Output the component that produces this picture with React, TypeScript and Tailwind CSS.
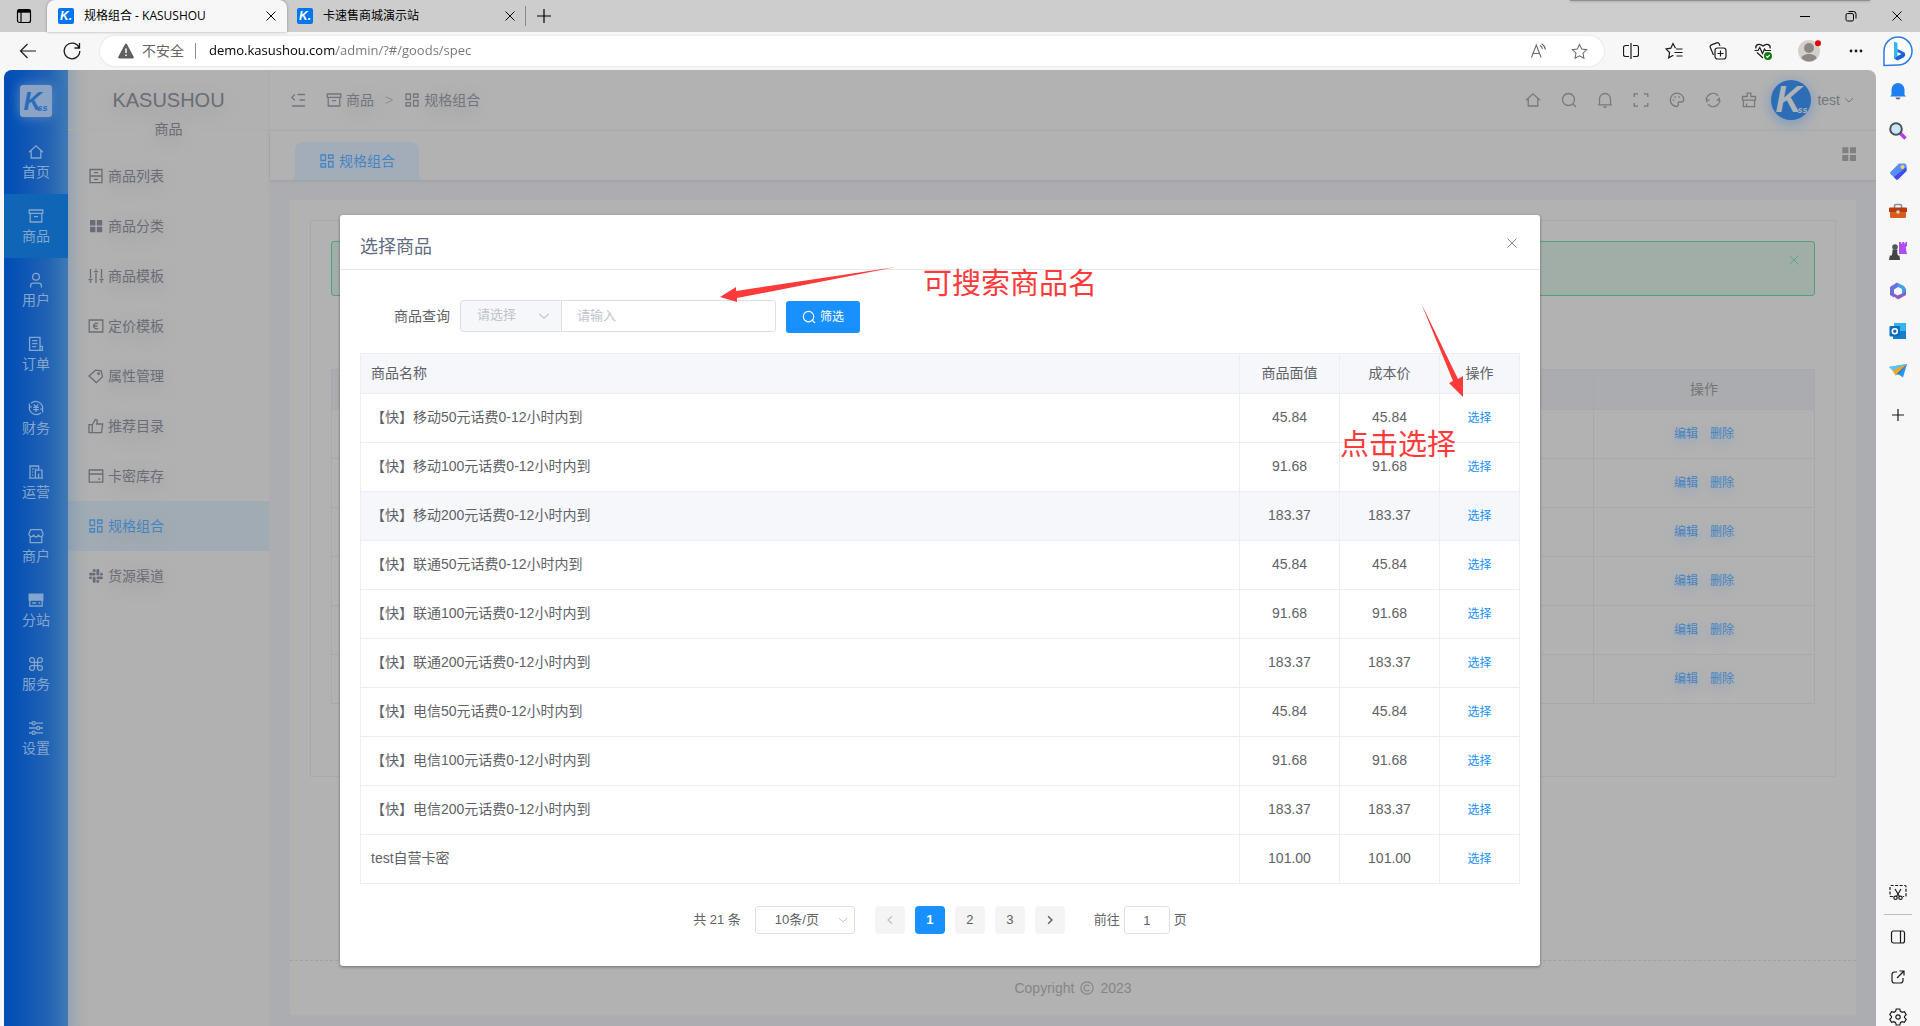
import type { ReactNode } from "react";
import { FaSlack } from "react-icons/fa";

type IconName =
  | "home"
  | "box"
  | "user"
  | "order"
  | "finance"
  | "building"
  | "shop"
  | "site"
  | "clover"
  | "sliders"
  | "cabinet"
  | "gridFill"
  | "slidersV"
  | "euro"
  | "tag"
  | "thumb"
  | "card"
  | "grid"
  | "slack"
  | "search"
  | "bell"
  | "full"
  | "palette"
  | "refresh"
  | "brush"
  | "fold"
  | "down"
  | "left"
  | "right"
  | "close";

// 16x16 stroke icons
const ICONS: Record<IconName, ReactNode> = {
  home: <path d="M1 8.2 8 1.8l7 6.4M3.2 6.8V14h9.6V6.8" />,
  box: <path d="M1.2 2h13.6v3.4H1.2zM2.2 5.4V14h11.6V5.4M6 8.6h4" />,
  user: (
    <>
      <circle cx="8" cy="4.8" r="3.4" />
      <path d="M2.6 15.5v-1.8c0-1.4 1.2-2.5 2.7-2.5h5.4c1.5 0 2.7 1.1 2.7 2.5v1.8" />
    </>
  ),
  order: <path d="M12 14.4V1.4H1.6v13h12.8v-4H12M4.2 4.6h5.2M4.2 7.6h5.2M4.2 10.6h4" />,
  finance: (
    <>
      <path d="M3 3.2a7 7 0 0 1 11.6 6M13 12.8A7 7 0 0 1 1.4 6.8M1.4 3.5v3.3h2.4M14.6 12.5V9.2h-2.4" />
      <path d="M5.7 4.4 8 7l2.3-2.6M5.2 7.4h5.6M5.2 9.6h5.6M8 7v5" />
    </>
  ),
  building: <path d="M1 14.2h14M2 14V2h8.6v4M7.4 14V6.2H14V14M10.6 14V9.5M4.2 5h1.6M4.2 8h1M4.2 11h1M7.4 4.6h1" />,
  shop: <path d="M2.6 1.6h10.8L15 6a2.2 2.2 0 0 1-4.6.6 2.4 2.4 0 0 1-4.8 0A2.2 2.2 0 0 1 1 6zM2.2 8.6v6h11.6v-6" />,
  site: (
    <>
      <path d="M1.2 2.2h13.6v6H1.2z" fill="currentColor" />
      <path d="M1.8 8v6h12.4V8M4.2 11h4M10.5 11h1.8" />
    </>
  ),
  clover: <path d="M6.4 6.4H4a2.4 2.4 0 1 1 2.4-2.4v8A2.4 2.4 0 1 1 4 9.6h8A2.4 2.4 0 1 1 9.6 12V4A2.4 2.4 0 1 1 12 6.4z" />,
  sliders: (
    <>
      <path d="M1 3.2h3M7.4 3.2H15M1 8h7.4M12 8h3M1 12.8h3M7.4 12.8H15" />
      <circle cx="5.7" cy="3.2" r="1.6" />
      <circle cx="10.2" cy="8" r="1.6" />
      <circle cx="5.7" cy="12.8" r="1.6" />
    </>
  ),
  cabinet: <path d="M2 1.5h12v13.2H2zM2 8h12M6 4.7h4M6 11.4h4" />,
  gridFill: (
    <path d="M2 2h5.4v5.4H2zM8.8 2h5.4v5.4H8.800zM2 8.800h5.400v5.400H2zM8.800 8.800h5.400v5.400H8.800z" fill="currentColor" stroke="none" />
  ),
  slidersV: <path d="M2.5 1v9M.5 11.5h4M2.5 12.5V15M8 5v10M6 3.6h4M8 1v1.500M13.500 1v9M11.500 11.500h4M13.500 12.500V15" />,
  euro: <path d="M1.2 2h13.6v12H1.2zM10.2 5.8a2.8 2.8 0 1 0 0 4.4M5.6 8h3.800" />,
  tag: (
    <>
      <path d="M1 8 7.500 2.200l5.700.6 1.300 6L8.300 14.600z" />
      <circle cx="10.600" cy="5.600" r=".8" />
    </>
  ),
  thumb: <path d="M1 6.600h3.200v8H1zM4.200 7l3.200-5.600c1.600 0 2.200 1.200 1.800 2.600L8.700 6h6l-1.200 8.600H4.200" />,
  card: <path d="M1.200 2h13.600v12.200H1.200zM1.200 6h13.600M10.500 11h1.600" />,
  grid: <path d="M2 2h4.500v5.500H2zM9.600 2H14v3.400H9.600zM2 10.600h4.500V14H2zM9.600 8.500H14V14H9.600z" />,
  slack: null,
  search: (
    <>
      <circle cx="7.500" cy="7.500" r="6" />
      <path d="m12 12 3 3" />
    </>
  ),
  bell: <path d="M2.500 12.800V7a5.500 5.500 0 0 1 11 0v5.800M1.200 12.800h13.600M6.400 15h3.200" />,
  full: <path d="M1.200 5V1.800H5M11 1.800h3.800V5M14.800 11v3.200H11M5 14.200H1.200V11" />,
  palette: (
    <>
      <path d="M14.700 7.400c0 1.800-1.300 2.600-2.700 2.600h-1.600c-1 0-1.600.9-1.200 1.800.4 1-.1 2.700-1.400 2.700a6.700 6.700 0 1 1 6.900-7.100z" />
      <path d="M3.800 8.200h1.400M5.400 5h1.400M9.400 5h1.400" />
    </>
  ),
  refresh: <path d="M2 10.500A6.500 6.500 0 0 1 13 3.800M14 5.500A6.500 6.500 0 0 1 3 12.200M1 5.800l.8 2.600 2.600-.6M15 10.200l-.8-2.600-2.600.6" />,
  brush: <path d="M6.200 4.500V1.200h3.600v3.300h4.700v3.600h-13V4.500zM2.400 8.100v6.500h11.200V8.100M5.500 14.400v-3" />,
  fold: <path d="M7.500 2.500H15M9.500 8H15M2 14h13M4.800 2.500 1.800 5.400l3 2.900" />,
  down: <path d="m2.500 5.500 5.500 5 5.500-5" />,
  left: <path d="M10.500 3 5.500 8l5 5" strokeWidth="2" />,
  right: <path d="m5.500 3 5 5-5 5" strokeWidth="2" />,
  close: <path d="m2 2 12 12M14 2 2 14" />,
};

function Icon({ name, className = "h-4 w-4" }: { name: IconName; className?: string }) {
  if (name === "slack") return <FaSlack className={className} />;
  return (
    <svg viewBox="0 0 16 16" className={`shrink-0 ${className}`} fill="none" stroke="currentColor" strokeWidth="1.300">
      {ICONS[name]}
    </svg>
  );
}

const NAV: { icon: IconName; label: string }[] = [
  { icon: "home", label: "首页" },
  { icon: "box", label: "商品" },
  { icon: "user", label: "用户" },
  { icon: "order", label: "订单" },
  { icon: "finance", label: "财务" },
  { icon: "building", label: "运营" },
  { icon: "shop", label: "商户" },
  { icon: "site", label: "分站" },
  { icon: "clover", label: "服务" },
  { icon: "sliders", label: "设置" },
];

const MENU: { icon: IconName; label: string }[] = [
  { icon: "cabinet", label: "商品列表" },
  { icon: "gridFill", label: "商品分类" },
  { icon: "slidersV", label: "商品模板" },
  { icon: "euro", label: "定价模板" },
  { icon: "tag", label: "属性管理" },
  { icon: "thumb", label: "推荐目录" },
  { icon: "card", label: "卡密库存" },
  { icon: "grid", label: "规格组合" },
  { icon: "slack", label: "货源渠道" },
];

const HEADER_ICONS: { icon: IconName; label: string }[] = [
  { icon: "home", label: "home" },
  { icon: "search", label: "search" },
  { icon: "bell", label: "notice" },
  { icon: "full", label: "fullscreen" },
  { icon: "palette", label: "theme" },
  { icon: "refresh", label: "refresh" },
  { icon: "brush", label: "clear" },
];

const GOODS = [
  { name: "【快】移动50元话费0-12小时内到", price: "45.84" },
  { name: "【快】移动100元话费0-12小时内到", price: "91.68" },
  { name: "【快】移动200元话费0-12小时内到", price: "183.37" },
  { name: "【快】联通50元话费0-12小时内到", price: "45.84" },
  { name: "【快】联通100元话费0-12小时内到", price: "91.68" },
  { name: "【快】联通200元话费0-12小时内到", price: "183.37" },
  { name: "【快】电信50元话费0-12小时内到", price: "45.84" },
  { name: "【快】电信100元话费0-12小时内到", price: "91.68" },
  { name: "【快】电信200元话费0-12小时内到", price: "183.37" },
  { name: "test自营卡密", price: "101.00" },
];

function Favicon() {
  return (
    <span className="flex h-4 w-4 shrink-0 items-center justify-center rounded-[2px] bg-[#0075f2] font-['Liberation_Sans'] text-xs font-bold italic leading-4 text-white">
      K.
    </span>
  );
}

function TitleBar() {
  return (
    <div className="relative flex h-8 shrink-0 bg-[#cdcdcd] text-xs text-black">
      <button aria-label="tabs" className="flex w-[47px] items-center justify-center">
        <svg viewBox="0 0 16 16" className="h-4 w-4" fill="none" stroke="currentColor" strokeWidth="1.200">
          <rect x="1.500" y="1.500" width="13" height="13" rx="2" />
          <path d="M1.500 3.200h13" strokeWidth="3" />
          <path d="M5 4v10" />
        </svg>
      </button>
      <div className="flex w-60 items-center rounded-t-lg bg-[#f7f7f7] pl-[11px] pr-2 shadow-[0_0_3px_rgba(0,0,0,0.35)]">
        <Favicon />
        <span className="ml-[10px] flex-1">规格组合 - KASUSHOU</span>
        <button aria-label="close tab" className="flex h-4 w-4 items-center justify-center">
          <Icon name="close" className="h-3 w-3" />
        </button>
      </div>
      <div className="flex w-[238px] items-center pl-[10px] pr-[7px]">
        <Favicon />
        <span className="ml-[10px] flex-1">卡速售商城演示站</span>
        <button aria-label="close tab" className="flex h-4 w-4 items-center justify-center">
          <Icon name="close" className="h-3 w-3" />
        </button>
      </div>
      <div className="my-[6px] w-px bg-[#8a8a8a]" />
      <button aria-label="new tab" className="flex w-9 items-center justify-center">
        <svg viewBox="0 0 16 16" className="h-4 w-4" stroke="currentColor" strokeWidth="1.200">
          <path d="M8 1v14M1 8h14" />
        </svg>
      </button>
      <div className="absolute right-[50px] top-0 h-px w-[300px] bg-[#8f8f8f] shadow-[0_0_3px_#777]" />
      <div className="ml-auto flex w-[138px]">
        <button aria-label="minimize" className="flex flex-1 items-center justify-center">
          <span className="h-px w-[10px] bg-black" />
        </button>
        <button aria-label="restore" className="flex flex-1 items-center justify-center">
          <svg viewBox="0 0 12 12" className="h-3 w-3" fill="none" stroke="currentColor">
            <rect x="1" y="3.500" width="7.500" height="7.500" rx="1.500" />
            <path d="M3.500 1.500h5a2.500 2.500 0 0 1 2.500 2.500v4.500" />
          </svg>
        </button>
        <button aria-label="close window" className="flex flex-1 items-center justify-center">
          <Icon name="close" className="h-3 w-3" />
        </button>
      </div>
    </div>
  );
}

function AddressBar() {
  return (
    <div className="flex h-[38px] shrink-0 items-center text-[#1a1a1a]">
      <button aria-label="back" className="ml-[19px] h-[18px] w-[18px]">
        <svg viewBox="0 0 18 18" fill="none" stroke="currentColor" strokeWidth="1.200">
          <path d="M17 9H1.500M8.500 2l-7 7 7 7" />
        </svg>
      </button>
      <button aria-label="reload" className="ml-[26px] h-[18px] w-[18px]">
        <svg viewBox="0 0 18 18" fill="none" stroke="currentColor" strokeWidth="1.300">
          <path d="M16 5.500A7.800 7.800 0 1 0 16.800 9M16.500 1v5h-5" />
        </svg>
      </button>
      <div className="ml-[19px] flex h-[30px] flex-1 items-center rounded-full bg-white pl-[18px] pr-4 shadow-[0_0_3px_rgba(0,0,0,0.12)]">
        <svg viewBox="0 0 16 16" className="h-4 w-4" fill="#5f5f5f">
          <path d="M7 1.200a1.100 1.100 0 0 1 2 0l6.700 12.600c.4.700-.1 1.700-1 1.700H1.300c-.9 0-1.400-1-1-1.700z" />
          <path d="M8 5.500v4.500M8 11.500v1.600" stroke="#fff" strokeWidth="1.500" />
        </svg>
        <span className="ml-2 text-sm text-[#666]">不安全</span>
        <span className="ml-[11px] h-4 w-px bg-[#8a8a8a]" />
        <input
          aria-label="address"
          defaultValue="demo.kasushou.com/admin/?#/goods/spec"
          className="ml-[13px] w-0 flex-1 bg-[linear-gradient(90deg,#000_0,#000_126px,#757575_127px)] bg-clip-text text-[13px] text-transparent outline-none"
        />
        <button aria-label="read aloud" className="h-4 w-[18px]">
          <svg viewBox="0 0 18 16" fill="none" stroke="#6b6b6b" strokeWidth="1.100">
            <path d="M1.500 14.500 6.300 2l4.800 12.500M3.200 10.500h6.200M10 2.600a4.500 4.500 0 0 1 2.400 3.400M11.500.8a8 8 0 0 1 4 5.700" />
          </svg>
        </button>
        <button aria-label="favorite" className="ml-[23px] h-[17px] w-[17px]">
          <svg viewBox="0 0 18 18" fill="none" stroke="#6b6b6b" strokeWidth="1.100">
            <path d="m9 1.500 2.300 4.900 5.300.7-3.900 3.700 1 5.400L9 13.600l-4.700 2.600 1-5.400L1.400 7.100l5.300-.7z" />
          </svg>
        </button>
      </div>
      <div className="flex w-[272px] items-center justify-between pl-[19px] pr-3">
        <button aria-label="split" className="h-4 w-4">
          <svg viewBox="0 0 16 16" fill="none" stroke="currentColor" strokeWidth="1.200">
            <path d="M8 0v16M6 2.500H2.500a2 2 0 0 0-2 2v7a2 2 0 0 0 2 2H6M10 2.500h3.500a2 2 0 0 1 2 2v7a2 2 0 0 1-2 2H10" />
          </svg>
        </button>
        <button aria-label="favorites" className="h-[18px] w-[18px]">
          <svg viewBox="0 0 18 18" fill="none" stroke="currentColor" strokeWidth="1.200">
            <path d="M10.500 6.200 8 1.500 5.800 6.200 1 7l3.600 3.500-.9 5.300L8.300 13.200M11 7h6.500M9.500 10.500h8M11.500 14h6" />
          </svg>
        </button>
        <button aria-label="collections" className="h-[18px] w-[18px]">
          <svg viewBox="0 0 18 18" fill="none" stroke="currentColor" strokeWidth="1.200">
            <rect x="6" y="6" width="11" height="11" rx="2.500" />
            <path d="M11.500 8.500v6M8.500 11.500h6M4.500 13 1.300 5.500a2 2 0 0 1 1.100-2.600l5.200-2a2 2 0 0 1 2.600 1l.8 2" />
          </svg>
        </button>
        <button aria-label="performance" className="h-[18px] w-[18px]">
          <svg viewBox="0 0 18 18" fill="none" stroke="currentColor" strokeWidth="1.200">
            <path d="M2 6.500C1 3 5 .5 9 4c4-3.500 8-1 7 2.500M.5 8.500H4l1.800-3 2.700 6 2-4.500 1 1.500H17M3 10.500l6 5.500" />
            <circle cx="14" cy="14" r="4" fill="#107c10" stroke="none" />
            <path d="m12.200 14 1.300 1.300 2.300-2.500" stroke="#fff" />
          </svg>
        </button>
        <button aria-label="profile" className="h-[22px] w-6">
          <svg viewBox="0 0 24 22">
            <circle cx="11" cy="11" r="11" fill="#d3d0cc" />
            <circle cx="11" cy="8" r="5" fill="#8d8884" />
            <path d="M3.500 18.500c0-6 15-6 15 0a11 11 0 0 1-15 0z" fill="#8d8884" />
            <circle cx="20" cy="3.200" r="3" fill="#e60000" />
          </svg>
        </button>
        <button aria-label="more" className="h-4 w-4">
          <svg viewBox="0 0 16 16" fill="currentColor">
            <circle cx="3" cy="8" r="1.400" />
            <circle cx="8" cy="8" r="1.400" />
            <circle cx="13" cy="8" r="1.400" />
          </svg>
        </button>
      </div>
    </div>
  );
}

const SIDE_APPS: { label: string; art: ReactNode }[] = [
  {
    label: "notifications",
    art: (
      <>
        <path d="M2.500 13V7.500a6.500 6.500 0 0 1 13 0V13l1.500 1.500H1z" fill="#1f7ff0" />
        <path d="M6.500 15.500h5a2.500 2 0 0 1-5 0z" fill="#6b6b78" />
      </>
    ),
  },
  {
    label: "search",
    art: (
      <>
        <path d="m11 11 5.500 5.500" stroke="#b63cf0" strokeWidth="3.500" />
        <circle cx="7" cy="7" r="5.800" fill="#c9e9fb" stroke="#4c5157" strokeWidth="2" />
      </>
    ),
  },
  {
    label: "shopping",
    art: (
      <>
        <path d="M10 1.500h6l1.500 1.500v6L9 17.200a1.500 1.500 0 0 1-2 0L1.500 12a1.500 1.500 0 0 1 0-2z" fill="#5b8df7" />
        <path d="M17.500 5v4L9 17.200a1.500 1.500 0 0 1-2 0L5 15z" fill="#3d4df0" />
        <circle cx="13.500" cy="5" r="2" fill="#ffd54a" />
      </>
    ),
  },
  {
    label: "tools",
    art: (
      <>
        <path d="M5.500 6V4a1.500 1.500 0 0 1 1.500-1.500h4A1.500 1.500 0 0 1 12.500 4v2" fill="none" stroke="#8b8f93" strokeWidth="1.600" />
        <path d="M1 9h16v5.500a1.500 1.500 0 0 1-1.500 1.500h-13A1.500 1.500 0 0 1 1 14.500z" fill="#dc5a1c" />
        <path d="M1 5.500h16a1 1 0 0 1 1 1V10H0V6.500a1 1 0 0 1 1-1z" fill="#b93c0e" />
        <circle cx="9" cy="10" r="1.800" fill="#d0d4d8" />
      </>
    ),
  },
  {
    label: "games",
    art: (
      <>
        <path d="M10 0h2v1.500h1.200V0h2v1.500h1.200V0H18v4l-1.200 1 .7 5.500 1 1.500H10z" fill="#b04cf5" />
        <circle cx="6" cy="5" r="2.800" fill="#555" />
        <path d="M3.500 7.500h5V9H8l.8 4.500h1.700L11 18H0l.8-4.500h2L3.600 9h-.1z" fill="#444" />
      </>
    ),
  },
  {
    label: "microsoft 365",
    art: (
      <>
        <path d="M8 .5 15 4l2 3v6l-4-2V7L8 4.500z" fill="#3fa2ef" />
        <path d="M8 .5 1 5v8l4 2.500V7.500L9 5z" fill="#6a6fe0" />
        <path d="M1 11.500 9 17.500l8-4.500V9l-4 2.500-4.500 2L5 11.500z" fill="#8a5fc4" />
        <path d="m9 5.800 3.200 1.700v3.400L9 12.600l-3.200-1.700V7.500z" fill="#f7f7f7" />
      </>
    ),
  },
  {
    label: "outlook",
    art: (
      <>
        <path d="M5 1h12v13H5z" fill="#35b5f0" />
        <path d="M11 9h6v8H4v-3z" fill="#1480cc" />
        <rect x=".5" y="4" width="10.500" height="10.500" rx="1" fill="#0f6cbd" />
        <circle cx="5.800" cy="9.200" r="2.500" fill="none" stroke="#fff" strokeWidth="1.600" />
      </>
    ),
  },
  {
    label: "drop",
    art: (
      <>
        <path d="M0 5 18 2 14 15.500 9 12z" fill="#2f95ee" />
        <path d="m0 5 18-3L4 9z" fill="#59c4f5" />
        <path d="M3.500 8.500 18 2 6.500 13.500z" fill="#f2a91f" />
        <path d="M6.500 13.500 18 2l-8 10z" fill="#1b6ed6" />
      </>
    ),
  },
];

function EdgeSidebar() {
  return (
    <aside className="flex w-11 shrink-0 flex-col items-center text-[#1a1a1a]">
      <button aria-label="bing" className="mb-px flex h-[38px] items-center">
        <svg viewBox="0 0 32 32" className="h-8 w-8" fill="none">
          <path d="M2 30.500V16A14 14 0 1 1 16 30z" fill="#fff" stroke="#2a7be4" strokeWidth="1.500" />
          <path d="M12 6.500 15.500 8v13L12 23.500z" fill="#2fb9f0" />
          <path d="M12 23.500l3.500-2.500 4-2-4-2V14l7 3.500c1.500 2 .5 4-1 5L15.500 25.500z" fill="#1d62d8" />
        </svg>
      </button>
      {SIDE_APPS.map((app) => (
        <button key={app.label} aria-label={app.label} className="flex h-10 items-center">
          <svg viewBox="0 0 18 18" className="h-[18px] w-[18px]">
            {app.art}
          </svg>
        </button>
      ))}
      <button aria-label="add" className="mt-1 flex h-10 items-center">
        <svg viewBox="0 0 14 14" className="h-[14px] w-[14px]" stroke="currentColor" strokeWidth="1.200">
          <path d="M7 1v12M1 7h12" />
        </svg>
      </button>
      <div className="flex-1" />
      <button aria-label="screenshot" className="mb-px flex h-[42px] items-center">
        <svg viewBox="0 0 18 18" className="h-[18px] w-[18px]" fill="none" stroke="currentColor" strokeWidth="1.200">
          <path d="M4 13.500H2a1 1 0 0 1-1-1v-9a1 1 0 0 1 1-1h14a1 1 0 0 1 1 1v9a1 1 0 0 1-1 1h-2" strokeDasharray="3 1.500" />
          <path d="m6 6 4.500 7.500M12 6l-4.500 7.500" />
          <circle cx="6.500" cy="14.800" r="1.700" />
          <circle cx="11.500" cy="14.800" r="1.700" />
        </svg>
      </button>
      <div className="h-px w-7 shrink-0 bg-[#bdbdbd]" />
      <button aria-label="hide sidebar" className="mt-[2px] flex h-10 items-center">
        <svg viewBox="0 0 16 16" className="h-4 w-4" fill="none" stroke="currentColor" strokeWidth="1.200">
          <rect x="1.500" y="2" width="13" height="12" rx="2" />
          <path d="M10.500 2v12" />
        </svg>
      </button>
      <button aria-label="open link" className="flex h-10 items-center">
        <svg viewBox="0 0 16 16" className="h-4 w-4" fill="none" stroke="currentColor" strokeWidth="1.200">
          <path d="M7 3H4.500A2.500 2.500 0 0 0 2 5.500v6A2.500 2.500 0 0 0 4.500 14h6a2.500 2.500 0 0 0 2.500-2.500V9M9.500 2H14v4.500M14 2 7 9" />
        </svg>
      </button>
      <button aria-label="settings" className="flex h-[29px] items-end">
        <svg viewBox="0 0 18 18" className="h-[18px] w-[18px]" fill="none" stroke="currentColor" strokeWidth="1.200">
          <path d="M7.200 1h3.600l.6 2.300 1.700 1 2.300-.7 1.800 3.100L15.500 8.400v1.200l1.700 1.700-1.800 3.100-2.300-.7-1.700 1-.6 2.300H7.200l-.6-2.300-1.700-1-2.300.7-1.800-3.100 1.700-1.700V8.400L.8 6.700l1.800-3.100 2.300.7 1.700-1z" />
          <circle cx="9" cy="9" r="2.200" />
        </svg>
      </button>
    </aside>
  );
}

function MainNav() {
  return (
    <nav className="flex w-16 shrink-0 flex-col bg-[linear-gradient(90deg,#004db6_0,#0d55b5_30%,#2263b3_70%,#4079b4_100%)] pt-[15px]">
      <div className="mx-auto mb-[13px] flex h-8 w-8 items-center justify-center rounded-[3px] bg-[#8ba3c4] shadow-[0_0_12px_#5f8ac0]">
        <span className="-ml-px text-[25px] font-bold italic leading-8 text-[#2a6cbc]">K</span>
        <span className="-ml-1 mt-[14px] text-[9px] font-bold italic leading-3 text-[#2a6cbc]">ss</span>
      </div>
      {NAV.map((item) => (
        <a
          key={item.label}
          href="#"
          className={`flex h-16 flex-col items-center gap-[2px] pt-[14px] text-sm leading-5 text-[#85a6cd] ${
            item.label === "商品" ? "bg-[#0f65b6]" : ""
          }`}
        >
          <Icon name={item.icon} />
          {item.label}
        </a>
      ))}
    </nav>
  );
}

function SubMenu() {
  return (
    <div className="w-[202px] shrink-0 border-r border-[#adadad] bg-[linear-gradient(90deg,#94a3b2_0,#a9acaf_10px,#b1b1b1_22px)] text-sm text-[#6a6c76]">
      <div className="mt-4 text-center text-xl leading-7 [text-shadow:0_5px_16px_#9a9b9f]">KASUSHOU</div>
      <div className="mt-[5px] flex items-center leading-5">
        <span className="h-px flex-1 bg-[#adadad]" />
        <span className="px-5 [text-shadow:0_5px_16px_#9a9b9f]">商品</span>
        <span className="h-px flex-1 bg-[#adadad]" />
      </div>
      <div className="mt-3">
        {MENU.map((item) => (
          <a
            key={item.label}
            href="#"
            className={`flex h-[50px] items-center gap-1 pl-5 [text-shadow:0_5px_16px_#9a9b9f] ${
              item.label === "规格组合" ? "bg-[#4a8ac8]/15 text-[#4584c2]" : ""
            }`}
          >
            <Icon name={item.icon} />
            {item.label}
          </a>
        ))}
      </div>
    </div>
  );
}

function PageHeader() {
  return (
    <>
      <header className="flex h-[61px] shrink-0 items-center border-b border-[#acacac] pr-[21px] text-sm text-[#73757d]">
        <button aria-label="fold menu" className="ml-5">
          <Icon name="fold" />
        </button>
        <div className="ml-5 flex items-center gap-1 [text-shadow:0_5px_16px_#9a9b9f]">
          <Icon name="box" />
          <span>商品</span>
          <span className="mx-[7px] text-[#929398]">&gt;</span>
          <Icon name="grid" />
          <span>规格组合</span>
        </div>
        <div className="flex-1" />
        {HEADER_ICONS.map((item) => (
          <button key={item.label} aria-label={item.label} className="flex w-9 justify-center text-[#78797c]">
            <Icon name={item.icon} />
          </button>
        ))}
        <button className="ml-1 flex items-center text-[#75767a]">
          <span className="flex h-10 w-10 items-center justify-center rounded-full bg-[#2d6db5] font-bold italic text-[#b0b3b8] shadow-[0_3px_14px_#7396bf]">
            <span className="text-4xl leading-10">K</span>
            <span className="-ml-1 mt-5 text-[9px] leading-3">ss</span>
          </span>
          <span className="ml-[6px]">test</span>
          <Icon name="down" className="ml-[3px] h-3 w-3" />
        </button>
      </header>
      <div className="z-[1] flex h-[49px] shrink-0 items-end justify-between pl-[25px] pr-[18px] shadow-[0_1px_3px_#9c9ea2]">
        <a
          href="#"
          className="relative flex h-[38px] w-[124px] items-center justify-center gap-1 rounded-t-lg bg-[#a3adb9] text-sm text-[#4584c2] before:absolute before:-left-[6px] before:bottom-0 before:h-[6px] before:w-[6px] before:bg-[radial-gradient(circle_at_0_0,transparent_6px,#a3adb9_6px)] after:absolute after:-right-[6px] after:bottom-0 after:h-[6px] after:w-[6px] after:bg-[radial-gradient(circle_at_100%_0,transparent_6px,#a3adb9_6px)]"
        >
          <Icon name="grid" />
          规格组合
        </a>
        <button aria-label="tab menu" className="mb-[17px] text-[#808083]">
          <Icon name="gridFill" className="h-[18px] w-[18px]" />
        </button>
      </div>
    </>
  );
}

function SpecPage() {
  return (
    <div className="flex min-h-0 flex-1 flex-col bg-[#abadb0] px-5 pb-[11px] pt-5">
      <div className="flex min-h-0 flex-1 flex-col bg-[#b2b2b2]">
        <div className="mx-5 mt-5 border border-[#a9aaad] px-5 pb-[72px] pt-5">
          <div className="flex h-[55px] justify-end rounded-[3px] border border-[#4fa277] bg-[#a1aea7] px-[14px] pt-3 text-[#5ba57f]">
            <button aria-label="close alert" className="h-3 w-3">
              <Icon name="close" className="h-3 w-3" />
            </button>
          </div>
          <table className="mt-[73px] w-full border-collapse text-sm text-[#747578]">
            <thead>
              <tr className="h-10 bg-[#abacaf]">
                <th className="border border-[#a8a9ad]" />
                <th className="w-[221px] border border-[#a8a9ad] pb-0.5 font-normal">操作</th>
              </tr>
            </thead>
            <tbody>
              {[1, 2, 3, 4, 5, 6].map((row) => (
                <tr key={row} className="h-[49px]">
                  <td className="border border-[#a8a9ad]" />
                  <td className="border border-[#a8a9ad] text-center text-xs text-[#4584c2] [text-shadow:0_4px_12px_#8aa1ba]">
                    <a href="#">编辑</a>
                    <a href="#" className="ml-3">
                      删除
                    </a>
                  </td>
                </tr>
              ))}
            </tbody>
          </table>
        </div>
        <footer className="mt-auto flex h-[55px] items-center justify-center border-t border-dashed border-[#a1a1a1] text-sm text-[#858585]">
          Copyright
          <svg viewBox="0 0 16 16" className="mx-[6px] h-[14px] w-[14px]" fill="none" stroke="currentColor" strokeWidth="1.300">
            <circle cx="8" cy="8" r="7" />
            <path d="M10.600 5.800a3.400 3.400 0 1 0 0 4.400" />
          </svg>
          2023
        </footer>
      </div>
    </div>
  );
}

function Pagination() {
  return (
    <div className="mt-[22px] flex h-7 items-center justify-center text-[13px] text-[#606266]">
      <span>共 21 条</span>
      <div className="relative ml-[14px]">
        <select aria-label="page size" className="h-7 w-[100px] appearance-none rounded-[3px] border border-[#dcdfe6] bg-white pl-[19px]">
          <option>10条/页</option>
        </select>
        <Icon name="down" className="pointer-events-none absolute right-[6px] top-2 h-3 w-3 text-[#c0c4cc]" />
      </div>
      <div className="ml-5 flex gap-[10px]">
        <button aria-label="previous page" className="flex h-7 w-[30px] items-center justify-center rounded-sm bg-[#f4f4f5] text-[#c0c4cc]">
          <Icon name="left" className="h-3 w-3" />
        </button>
        {[1, 2, 3].map((page) => (
          <button
            key={page}
            className={`h-7 w-[30px] rounded-sm ${page === 1 ? "bg-[#1890ff] font-bold text-white" : "bg-[#f4f4f5]"}`}
          >
            {page}
          </button>
        ))}
        <button aria-label="next page" className="flex h-7 w-[30px] items-center justify-center rounded-sm bg-[#f4f4f5]">
          <Icon name="right" className="h-3 w-3" />
        </button>
      </div>
      <label className="ml-[29px] flex items-center">
        前往
        <input defaultValue="1" className="mx-1 h-7 w-[46px] rounded-[3px] border border-[#dcdfe6] text-center" />
        页
      </label>
    </div>
  );
}

function GoodsDialog() {
  return (
    <div role="dialog" aria-label="选择商品" className="relative w-[1200px] rounded-[3px] bg-white pb-8 text-sm text-[#606266] shadow-[0_1px_3px_rgba(0,0,0,0.4)]">
      <div className="flex h-[55px] items-center justify-between border-b border-[#e6e8ec] px-5 pt-[10px]">
        <h2 className="text-lg text-[#606a80]">选择商品</h2>
        <button aria-label="close" className="mr-[2px] text-[#84878c]">
          <Icon name="close" className="mb-2 h-3 w-3" />
        </button>
      </div>
      <div className="px-5 pt-[30px]">
        <form className="flex h-[33px] items-start" onSubmit={(e) => e.preventDefault()}>
          <label htmlFor="goods-key" className="w-[90px] text-right leading-8">
            商品查询
          </label>
          <div className="relative ml-[10px]">
            <select
              aria-label="查询字段"
              className="h-8 w-[102px] appearance-none rounded-l-[3px] border border-[#dcdfe6] bg-[#f5f7fa] pb-0.5 pl-4 text-[13px] text-[#bfc3cb]"
            >
              <option>请选择</option>
            </select>
            <Icon name="down" className="pointer-events-none absolute right-[11px] top-[9px] h-[14px] w-[14px] text-[#c0c4cc]" />
          </div>
          <input
            id="goods-key"
            placeholder="请输入"
            className="-ml-px h-8 w-[215px] rounded-r-[3px] border border-[#dcdfe6] px-[15px] pb-0.5 text-[13px] placeholder:text-[#bfc3cb]"
          />
          <button className="ml-[10px] mt-px flex h-8 w-[74px] items-center justify-center gap-1 rounded-[3px] bg-[#1890ff] text-xs text-white">
            <Icon name="search" className="h-[14px] w-[14px]" />
            筛选
          </button>
        </form>
        <table className="mt-5 w-full border-collapse">
          <thead>
            <tr className="h-10 bg-[#f5f7fb]">
              <th className="border border-[#ebeef5] px-[10px] pb-0.5 text-left font-normal">商品名称</th>
              <th className="w-[100px] border border-[#ebeef5] pb-0.5 font-normal">商品面值</th>
              <th className="w-[100px] border border-[#ebeef5] pb-0.5 font-normal">成本价</th>
              <th className="w-[80px] border border-[#ebeef5] pb-0.5 font-normal">操作</th>
            </tr>
          </thead>
          <tbody>
            {GOODS.map((item, i) => (
              <tr key={item.name} className={`h-[49px] ${i === 2 ? "bg-[#f5f7fa]" : ""}`}>
                <td className="border border-[#ebeef5] px-[10px] pb-0.5">{item.name}</td>
                <td className="border border-[#ebeef5] pb-0.5 text-center">{item.price}</td>
                <td className="border border-[#ebeef5] pb-0.5 text-center">{item.price}</td>
                <td className="border border-[#ebeef5] text-center text-xs text-[#1890ff]">
                  <a href="#">选择</a>
                </td>
              </tr>
            ))}
          </tbody>
        </table>
        <Pagination />
      </div>

      {/* hand-drawn notes over the dialog */}
      <svg viewBox="0 0 176 36" className="absolute left-[380px] top-[51px] h-9 w-44" fill="#fd3a3a">
        <path d="M0 31 16 21v4L176 1 17 32v4z" />
      </svg>
      <span className="absolute left-[583px] top-[49px] text-[29px] leading-10 text-[#fd3a3a]">可搜索商品名</span>
      <svg viewBox="0 0 42 94" className="absolute left-[1081px] top-[88px] h-[94px] w-[42px]" fill="#fd3a3a">
        <path d="M0 0 37 76l5-3v21L28 80l4-2z" />
      </svg>
      <span className="absolute left-[1000px] top-[210px] text-[29px] leading-10 text-[#fd3a3a]">点击选择</span>
    </div>
  );
}

export default function App() {
  return (
    <div className="flex h-screen flex-col overflow-hidden bg-[#f7f7f7] font-['Open_Sans','Noto_Sans_CJK_SC',sans-serif]">
      <TitleBar />
      <div className="flex min-h-0 flex-1">
        <div className="flex min-w-0 flex-1 flex-col">
          <AddressBar />
          <div className="relative ml-1 flex min-h-0 flex-1 overflow-hidden rounded-t-lg bg-[#b2b2b2] font-['Liberation_Sans','Noto_Sans_CJK_SC',sans-serif]">
            <MainNav />
            <SubMenu />
            <main className="flex min-w-0 flex-1 flex-col">
              <PageHeader />
              <SpecPage />
            </main>
            <div className="absolute inset-0 flex items-start justify-center pt-[145px]">
              <GoodsDialog />
            </div>
          </div>
        </div>
        <EdgeSidebar />
      </div>
    </div>
  );
}
